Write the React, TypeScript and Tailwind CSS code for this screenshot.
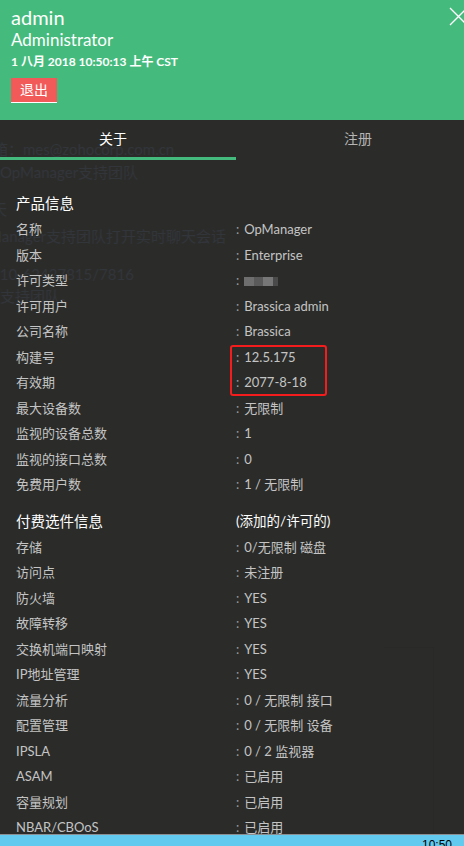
import React from 'react'

const font = { fontFamily: 'Lato, "Noto Sans CJK SC", "Noto Sans", sans-serif' }

const productRows: [string, React.ReactNode][] = [
  ['名称', 'OpManager'],
  ['版本', 'Enterprise'],
  ['许可类型', 'blur'],
  ['许可用户', 'Brassica admin'],
  ['公司名称', 'Brassica'],
  ['构建号', '12.5.175'],
  ['有效期', '2077-8-18'],
  ['最大设备数', '无限制'],
  ['监视的设备总数', '1'],
  ['监视的接口总数', '0'],
  ['免费用户数', '1 / 无限制'],
]

const addonRows: [string, string][] = [
  ['存储', '0/无限制 磁盘'],
  ['访问点', '未注册'],
  ['防火墙', 'YES'],
  ['故障转移', 'YES'],
  ['交换机端口映射', 'YES'],
  ['IP地址管理', 'YES'],
  ['流量分析', '0 / 无限制 接口'],
  ['配置管理', '0 / 无限制 设备'],
  ['IPSLA', '0 / 2 监视器'],
  ['ASAM', '已启用'],
  ['容量规划', '已启用'],
  ['NBAR/CBOoS', '已启用'],
]

function Row({ label, value }: { label: string; value: React.ReactNode }) {
  return (
    <div className="grid grid-cols-[220px_1fr] h-[25.5px] items-center">
      <span className="text-[13px] text-[#c4c4c4]">{label}</span>
      <span className="text-[13px] text-[#c4c4c4] flex items-center">
        <span className="text-[#9a9a9a] mr-[5px]">:</span>
        {value === 'blur' ? (
          <span className="flex h-[9px] mt-[2px] blur-[0.6px]">
            <span className="w-[10px] bg-[#6e6e6e]" />
            <span className="w-[9px] bg-[#5a5a5a]" />
            <span className="w-[10px] bg-[#777]" />
            <span className="w-[5px] bg-[#4a4a4a]" />
          </span>
        ) : (
          value
        )}
      </span>
    </div>
  )
}

export default function App() {
  return (
    <div className="relative w-[464px] h-[846px] overflow-hidden bg-[#2b2c2a] flex flex-col" style={font}>
      {/* faded page behind the panel */}
      <div className="absolute left-0 top-[141px] text-[15px] text-[#32353a] leading-none whitespace-nowrap">
        <div className="absolute left-[-7px] top-[1px]">箱：mes@zohocorp.com.cn</div>
        <div className="absolute left-0 top-[24px]">OpManager支持团队</div>
        <div className="absolute left-[-8px] top-[61px]">天</div>
        <div className="absolute left-[-12px] top-[88px]">Manager支持团队打开实时聊天会话</div>
        <div className="absolute left-[-9px] top-[126px]">010-62427815/7816</div>
        <div className="absolute left-[-15px] top-[148px]">的支持团队。</div>
      </div>
      <div className="absolute left-[433px] top-[647px] w-px h-[187px] bg-[#292a28]" />
      <div className="absolute left-[384px] top-[647px] w-[49px] h-px bg-[#292a28]" />

      {/* Header */}
      <div className="relative h-[120px] bg-[#44bb7c] px-[11px] pt-[5px] text-white shrink-0">
        <div className="text-[20px] leading-[24px]">admin</div>
        <div className="text-[17px] leading-[22px]">Administrator</div>
        <div className="text-[12px] font-bold leading-[16px] mt-[3px]">1 八月 2018 10:50:13 上午 CST</div>
        <button className="mt-[8px] w-[46px] h-[25px] bg-[#f25a5a] border-b-[1.5px] border-white text-[14px] text-white leading-none">
          退出
        </button>
        <svg className="absolute left-[449px] top-[7px]" width="19" height="19" viewBox="0 0 19 19">
          <path d="M1 1 L18 18 M18 1 L1 18" stroke="#fff" strokeWidth="1.3" fill="none" />
        </svg>
      </div>

      {/* Tabs */}
      <div className="relative grid grid-cols-2 h-[40px] shrink-0">
        <div className="flex items-center justify-center text-[14px] text-white pb-[3px] -ml-[6px]">关于</div>
        <div className="flex items-center justify-center text-[14px] text-[#b5b5b5] pb-[3px] ml-[20px]">注册</div>
        <div className="absolute left-0 bottom-0 w-[236px] h-[3px] bg-[#44bb7c]" />
      </div>

      {/* Content */}
      <div className="relative flex-1 overflow-hidden px-[16px] pt-[32px]">
        <div className="h-[26px] flex items-center text-[14.5px] text-white -mt-[1px]">产品信息</div>
        {productRows.map(([l, v]) => (
          <Row key={l} label={l} value={v} />
        ))}
        <div className="grid grid-cols-[220px_1fr] h-[26px] items-center mt-[11px] text-[14.5px] text-white">
          <span>付费选件信息</span>
          <span className="text-[13.5px]">(添加的/许可的)</span>
        </div>
        {addonRows.map(([l, v]) => (
          <Row key={l} label={l} value={v} />
        ))}
      </div>

      {/* highlight box */}
      <div className="absolute left-[230px] top-[345px] w-[97px] h-[51px] border-2 border-[#f41c1c] rounded-[3px]" />

      {/* Taskbar */}
      <div className="h-[12px] shrink-0 bg-[#62c9ef] border-t border-[#8a8f93] overflow-hidden flex justify-end pr-[12px]">
        <span className="text-[12px] text-black leading-none pt-[4px]" style={{ fontFamily: '"Liberation Sans", sans-serif' }}>10:50</span>
      </div>
    </div>
  )
}
